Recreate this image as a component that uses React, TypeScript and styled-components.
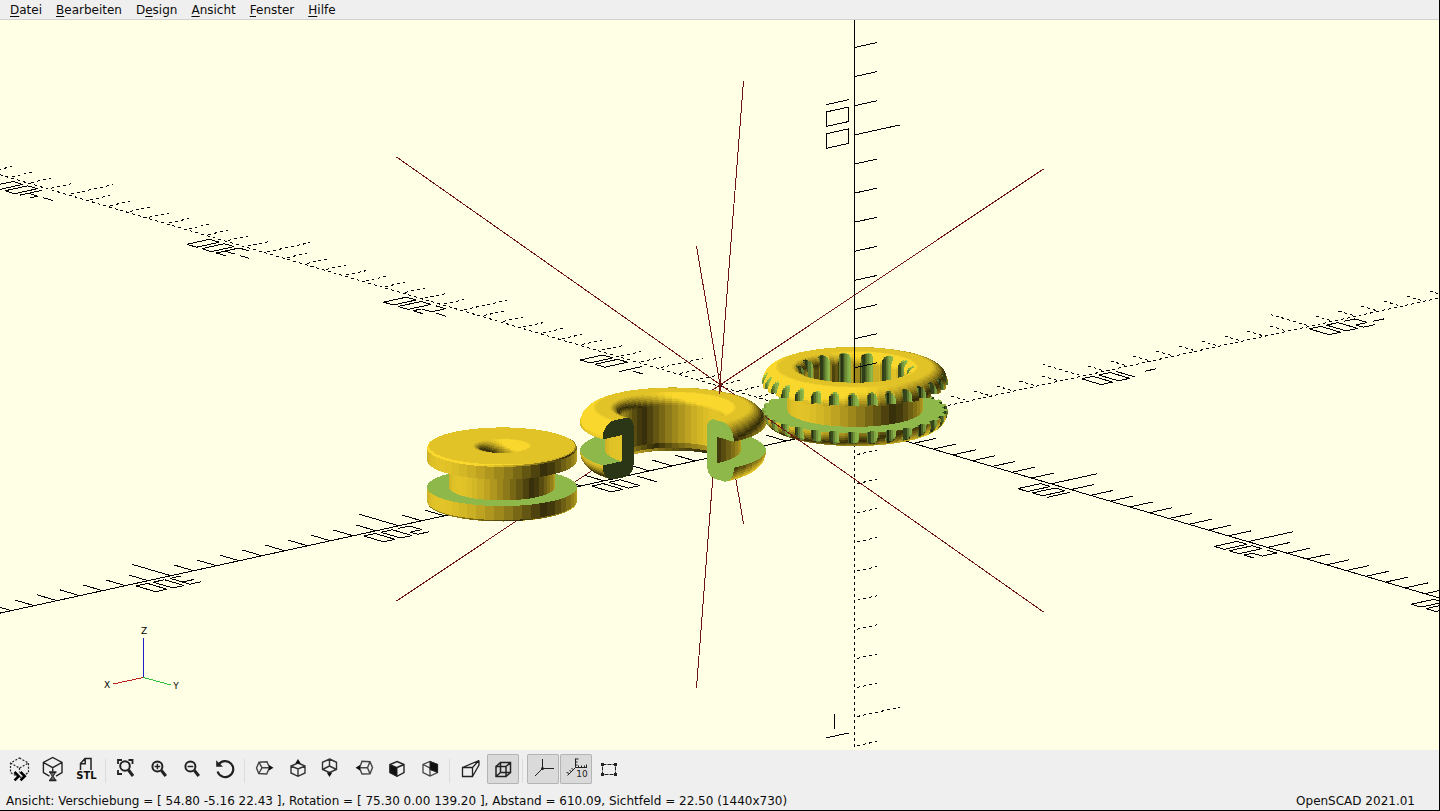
import React, { useMemo } from "react";
import styled, { createGlobalStyle } from "styled-components";

const GlobalStyle = createGlobalStyle`
  * { box-sizing: border-box; }
  body { margin: 0; background: #efefef; }
`;

const Window = styled.div`
  display: flex;
  flex-direction: column;
  height: 100vh;
  background: #efefef;
  border-right: 1px solid #000;
  border-bottom: 1px solid #000;
  color: #0c0c0c;
  font: 12px/16px "DejaVu Sans", sans-serif;
`;

const MenuBar = styled.nav`
  display: flex;
  gap: 14px;
  height: 20px;
  flex: none;
  padding: 1px 10px 0;
  border-bottom: 1px solid #d2d2d0;
`;

const MenuItem = styled.button`
  padding: 0;
  border: 0;
  background: none;
  color: inherit;
  font: inherit;
`;

const Mnemonic = styled.span`
  text-decoration: underline;
  text-underline-offset: 2px;
`;

const Viewport = styled.main`
  flex: 1;
  min-height: 0;
  background: #ffffe5;
`;

const Scene = styled.svg`
  display: block;
  width: 100%;
  height: 100%;
`;

const ToolBar = styled.div`
  display: flex;
  gap: 1px;
  flex: none;
  padding: 4px 4px 6px;
`;

const Tool = styled.button<{ $active?: boolean }>`
  width: 32px;
  height: 30px;
  padding: 0;
  border: 0;
  border-radius: 2px;
  background: ${(p) => (p.$active ? "#dadada" : "none")};
  box-shadow: ${(p) => (p.$active ? "inset 0 0 0 1px #b4b4b4" : "none")};
  color: #222;
`;

const ToolIcon = styled.svg`
  display: block;
  width: 32px;
  height: 30px;
  fill: none;
  stroke: currentColor;
`;

const Separator = styled.span`
  width: 1px;
  margin: 5px 3px 1px 2px;
  background: #dcdcdc;
`;

const StatusBar = styled.footer`
  display: flex;
  justify-content: space-between;
  height: 20px;
  flex: none;
  padding: 3px 24px 0 6px;
  white-space: nowrap;
`;

/* ---------- camera ---------- */

type Vec3 = [number, number, number];
type Point = [number, number];

const RAD = Math.PI / 180;
const TILT_SIN = Math.sin(75.3 * RAD);
const TILT_COS = Math.cos(75.3 * RAD);
const HEADING = 139.2;
const UNIT = 30.1;
const ORIGIN: Point = [854.5, 406];

const AXIS: Record<"x" | "y" | "z", Point> = {
  x: [UNIT * Math.cos(HEADING * RAD), UNIT * Math.sin(HEADING * RAD) * TILT_COS],
  y: [UNIT * Math.sin(HEADING * RAD), -UNIT * Math.cos(HEADING * RAD) * TILT_COS],
  z: [0, -UNIT * TILT_SIN],
};

const at = (base: Point, a: Point, n: number, b: Point, m: number): Point => [
  base[0] + a[0] * n + b[0] * m,
  base[1] + a[1] * n + b[1] * m,
];
const r1 = (n: number) => Math.round(n * 10) / 10;
const seg = (p: Point, q: Point) => `M${r1(p[0])} ${r1(p[1])}L${r1(q[0])} ${r1(q[1])}`;

/* ---------- rulers ---------- */

interface Ruler {
  dir: Point;
  up: Point;
  tick: number;
  sign: 1 | -1;
  forward: boolean;
  length: number;
}

const RULERS: Ruler[] = [
  { dir: AXIS.x, up: AXIS.y, tick: -1, sign: 1, forward: true, length: 39 },
  { dir: AXIS.y, up: AXIS.x, tick: -1, sign: 1, forward: false, length: 34 },
  { dir: AXIS.z, up: AXIS.x, tick: -1, sign: 1, forward: false, length: 15 },
  { dir: AXIS.x, up: AXIS.y, tick: -1, sign: -1, forward: false, length: 28 },
  { dir: AXIS.y, up: AXIS.x, tick: -1, sign: -1, forward: true, length: 45 },
  { dir: AXIS.z, up: AXIS.x, tick: -1, sign: -1, forward: true, length: 14 },
];

const STROKES: Record<string, string[][]> = {
  "0": [["TL", "TR", "BR", "BL", "TL"]],
  "1": [["T1", "B1"]],
  "2": [["TL", "TR", "MR", "ML", "BL", "BR"]],
  "3": [["TL", "TR", "BR", "BL"], ["ML", "MR"]],
  "4": [["TL", "ML", "MR"], ["TR", "BR"]],
  "-": [["ML", "MR"]],
};

function rulerPaths(r: Ruler) {
  const p = (n: number, h: number) => at(ORIGIN, r.dir, n * r.sign, r.up, h);
  const line = seg(p(0, 0), p(r.length, 0));
  let ticks = "";
  for (let n = 1; n < r.length; n++) ticks += seg(p(n, 0), p(n, r.tick * (n % 10 ? 1 : 2)));
  let labels = "";
  for (let n = 10; n < r.length + 2; n += 10) {
    const text = (r.sign < 0 ? "-" : "") + n * 10;
    const chars = r.forward ? [...text] : [...text].reverse();
    chars.forEach((ch, k) => {
      const c = n + k * 0.75;
      const left = r.forward ? c - 0.25 : c + 0.25;
      const right = r.forward ? c + 0.25 : c - 0.25;
      const row: Record<string, number> = { T: 1.25, M: 0.875, B: 0.25 };
      const col: Record<string, number> = { L: left, R: right, "1": c - 0.25 };
      STROKES[ch].forEach((s) => {
        for (let i = 1; i < s.length; i++)
          labels += seg(p(col[s[i - 1][1]], row[s[i - 1][0]]), p(col[s[i][1]], row[s[i][0]]));
      });
    });
  }
  return { line, ticks, labels };
}

/* ---------- grommets ---------- */

const LIGHT: Vec3 = [-0.5774, 0.411, 0.705];
const YELLOW: Vec3 = [249, 215, 44];
const GREEN: Vec3 = [157, 203, 81];

interface Grommet {
  cx: number;
  cy: number;
  outer: number;
  hub: number;
  bore: number;
  edge: number;
  lip: number;
  levels: [number, number, number];
  cut?: boolean;
  grooves?: boolean;
}

interface ProfilePoint {
  r: number;
  z: number;
  green?: boolean;
}

const GROMMETS: Grommet[] = [
  { cx: 855, cy: 406, outer: 93, hub: 68, bore: 52, edge: 16, lip: 11, levels: [17, 44, 61], grooves: true },
  { cx: 673, cy: 446.5, outer: 93, hub: 68, bore: 52, edge: 16, lip: 11, levels: [17, 44, 61], cut: true },
  { cx: 502, cy: 483, outer: 75, hub: 53, bore: 19, edge: 2, lip: 10, levels: [16.5, 44, 59] },
];

function profile(g: Grommet): ProfilePoint[] {
  const [a, b, top] = g.levels;
  const pts: ProfilePoint[] = [];
  const arc = (r: number, z: number, rad: number, from: number, to: number, steps: number) => {
    for (let i = 0; i <= steps; i++) {
      const t = (from + ((to - from) * i) / steps) * RAD;
      pts.push({ r: r + rad * Math.cos(t), z: z + rad * Math.sin(t) });
    }
  };
  const steps = g.edge > 5 ? 11 : 2;
  arc(g.bore + g.lip, g.lip, g.lip, 180, 270, 3);
  arc(g.outer - g.edge, g.edge, g.edge, -90, 0, steps);
  pts.push({ r: g.outer, z: a, green: true });
  pts.push({ r: (g.outer + g.hub) / 2, z: a, green: true });
  pts.push({ r: g.hub, z: a });
  pts.push({ r: g.hub, z: (a + b) / 2 });
  pts.push({ r: g.hub, z: b, green: true });
  pts.push({ r: g.outer, z: b });
  arc(g.outer - g.edge, top - g.edge, g.edge, 0, 90, steps);
  pts.push({ r: (g.outer - g.edge + g.bore + g.lip) / 2, z: top });
  arc(g.bore + g.lip, top - g.lip, g.lip, 90, 180, 9);
  pts.push({ r: g.bore, z: top * 0.6 });
  pts.push({ r: g.bore, z: top * 0.35 });
  pts.push({ r: g.bore, z: g.lip });
  return pts;
}

const wrap = (a: number, step: number) => a - Math.round(a / step) * step;

function outerLimit(deg: number) {
  const d = wrap(deg, 12) * RAD;
  const q = 5.5 * 5.5 - (93 * Math.sin(d)) ** 2;
  return q > 0 ? 93 * Math.cos(d) - Math.sqrt(q) : Infinity;
}

function innerLimit(deg: number) {
  const d = wrap(deg, 24) * RAD;
  const q = 36 - (53 * Math.sin(d)) ** 2;
  return q > 0 ? 53 * Math.cos(d) + Math.sqrt(q) : 0;
}

function paint(base: Vec3, n: Vec3) {
  const len = Math.hypot(...n) || 1;
  const s = Math.min(1, 0.2 + Math.abs((n[0] * LIGHT[0] + n[1] * LIGHT[1] + n[2] * LIGHT[2]) / len));
  return `rgb(${base.map((c) => Math.round(c * s)).join(",")})`;
}

interface Face {
  depth: number;
  fill: string;
  points: string;
}

function buildFaces(g: Grommet): Face[] {
  const prof = profile(g);
  const facet = 7.2;
  const angles = new Set<number>();
  for (let i = 0; i <= 50; i++) angles.add(r1(i * facet));
  if (g.cut) {
    angles.add(270);
  }
  if (g.grooves) {
    for (let k = 0; k < 30; k++)
      [-3.4, -3.2, -2.6, -1.4, 0, 1.4, 2.6, 3.2, 3.4].forEach((d) => angles.add(r1((k * 12 + d + 360) % 360)));
    for (let k = 0; k < 15; k++)
      [-6.5, -5.8, -4.4, 4.4, 5.8, 6.5].forEach((d) => angles.add(r1((k * 24 + d + 360) % 360)));
  }
  const list = [...angles].sort((p, q) => p - q).filter((v) => !g.cut || v <= 270);

  const project = (p: Vec3) =>
    `${r1(g.cx + p[0])},${r1(g.cy + p[1] * TILT_COS - p[2] * TILT_SIN)}`;
  const depthOf = (p: Vec3) => p[1] * TILT_SIN + p[2] * TILT_COS;

  const place = (pt: ProfilePoint, deg: number): Vec3 => {
    const local = (deg - (Math.floor(deg / facet + 1e-6) + 0.5) * facet) * RAD;
    let r = (pt.r * Math.cos((facet / 2) * RAD)) / Math.cos(local);
    if (g.grooves) {
      if (r > 75) r = Math.min(r, outerLimit(deg));
      if (r < 64) r = Math.max(r, innerLimit(deg));
    }
    const az = (HEADING + deg) * RAD;
    return [r * Math.cos(az), r * Math.sin(az), pt.z];
  };

  const faces: Face[] = [];
  for (let j = 1; j < list.length; j++) {
    const t0 = list[j - 1];
    const t1 = list[j];
    const mid = (t0 + t1) / 2;
    for (let i = 0; i < prof.length - 1; i++) {
      const s0 = prof[i];
      const s1 = prof[i + 1];
      const p = [place(s0, t0), place(s0, t1), place(s1, t1), place(s1, t0)];
      const e: Vec3 = [p[2][0] - p[0][0], p[2][1] - p[0][1], p[2][2] - p[0][2]];
      const f: Vec3 = [p[3][0] - p[1][0], p[3][1] - p[1][1], p[3][2] - p[1][2]];
      const n: Vec3 = [
        e[1] * f[2] - e[2] * f[1],
        e[2] * f[0] - e[0] * f[2],
        e[0] * f[1] - e[1] * f[0],
      ];
      if (depthOf(n) <= 0) continue;
      const rm = (s0.r + s1.r) / 2;
      const carved =
        !!g.grooves && ((rm > 75 && rm > outerLimit(mid)) || (rm < 64 && rm < innerLimit(mid)));
      faces.push({
        depth: p.reduce((sum, q) => sum + depthOf(q), 0) / 4,
        fill: paint(s0.green || carved ? GREEN : YELLOW, n),
        points: p.map(project).join(" "),
      });
    }
  }
  faces.sort((m, n) => m.depth - n.depth);

  if (g.cut) {
    const cap = (deg: number, side: number) => {
      const az = (HEADING + deg) * RAD;
      faces.push({
        depth: 0,
        fill: paint(GREEN, [-Math.sin(az) * side, Math.cos(az) * side, 0]),
        points: prof.map((s) => project([s.r * Math.cos(az), s.r * Math.sin(az), s.z])).join(" "),
      });
    };
    cap(0, -1);
    cap(270, 1);
  }
  return faces;
}

function Model() {
  const faces = useMemo(() => GROMMETS.map(buildFaces), []);
  return (
    <>
      {faces.map((list, k) => (
        <g key={k} shapeRendering="crispEdges">
          {list.map((f, i) => (
            <polygon key={i} points={f.points} fill={f.fill} />
          ))}
        </g>
      ))}
    </>
  );
}

function Rulers() {
  return (
    <g stroke="#000" fill="none" shapeRendering="crispEdges">
      {RULERS.map((r, i) => {
        const { line, ticks, labels } = rulerPaths(r);
        const dash = r.sign < 0 ? "3 3" : undefined;
        return (
          <g key={i}>
            <path d={line} strokeDasharray={dash} />
            <path d={ticks} strokeDasharray={dash} strokeDashoffset={dash ? 3 : 0} />
            <path d={labels} />
          </g>
        );
      })}
    </g>
  );
}

function View3D() {
  return (
    <Scene viewBox="0 0 1439 730" preserveAspectRatio="xMidYMid slice" role="img" aria-label="3D-Ansicht">
      <Rulers />
      <path
        d="M743.5 61L696.5 668M696.5 226L743.5 504M396.5 137L1043.5 592M1043.5 149L396.5 581"
        stroke="#6e1414"
        fill="none"
        shapeRendering="crispEdges"
      />
      <Model />
      <g fill="none" shapeRendering="crispEdges">
        <path d="M854.5 320V363M854.5 347.800L877.300 342.800" stroke="#000" />
        <path d="M765 396.500L800 421M719.500 364V374" stroke="#6e1414" />
      </g>
      <g fill="none" shapeRendering="crispEdges">
        <path d="M143.500 657V618" stroke="#2020c8" />
        <path d="M143.500 657.500L113 664" stroke="#c02020" />
        <path d="M143.500 657.500L171 665" stroke="#30c040" />
      </g>
      <g fill="#000" fontFamily="DejaVu Sans, sans-serif" fontSize="9" textAnchor="middle">
        <text x="107" y="668">X</text>
        <text x="176" y="669">Y</text>
        <text x="144" y="614">Z</text>
      </g>
    </Scene>
  );
}

/* ---------- toolbar ---------- */

type ToolDef = { name: string; icon: React.ReactNode; active?: boolean };

const Lens = ({ x }: { x: number }) => (
  <>
    <circle cx={x} cy="12.5" r="5" strokeWidth="2" />
    <path d={`M${x + 4} 16.500L${x + 8.4} 22`} strokeWidth="3" />
  </>
);

const GROUPS: ToolDef[][] = [
  [
    {
      name: "Vorschau",
      icon: (
        <>
          <path d="M15.5 4L24.5 9V18.500L15.500 24L6.500 18.500V9ZM6.500 9L15.500 14L24.500 9M15.500 14V18.500" strokeWidth="1.2" strokeDasharray="2 1.5" />
          <path d="M10.500 18L14.700 22.200L10.500 26.400M16.500 18L20.700 22.200L16.500 26.400" strokeWidth="2.6" stroke="#000" />
        </>
      ),
    },
    {
      name: "Rendern",
      icon: (
        <>
          <path d="M12.400 22.200L6.400 18.700V8.500L15.700 3.500L25 8.500V18.700L19 22.200M6.400 8.500L15.700 13.700L25 8.500M15.700 13.700V17.500" strokeWidth="1.4" />
          <path d="M12 18H19.500M12 26.500H19.500" strokeWidth="1.5" />
          <path d="M13 18.500H18.500L16.200 22.200L18.500 26H13L15.200 22.200Z" strokeWidth="1" fill="#666" />
        </>
      ),
    },
    {
      name: "Als STL exportieren",
      icon: (
        <>
          <path d="M10.500 16V9.500L15 4.500H21V16M15.200 4.500V9.700H10.500" strokeWidth="1.5" />
          <text x="16.5" y="25" textAnchor="middle" fontSize="10" fontWeight="bold" fontFamily="DejaVu Sans, sans-serif" fill="#111" stroke="none">STL</text>
        </>
      ),
    },
  ],
  [
    {
      name: "Alles anzeigen",
      icon: (
        <>
          <path d="M8 10V6H12M18.500 6H22.500V10M8 16V20H12" strokeWidth="1.8" />
          <circle cx="15" cy="12" r="4.8" strokeWidth="2" />
          <path d="M18.500 16L23 22" strokeWidth="3" />
        </>
      ),
    },
    { name: "Vergrößern", icon: (<><Lens x={14.4} /><path d="M11.600 12.500H17.200M14.400 9.700V15.300" strokeWidth="1.5" /></>) },
    { name: "Verkleinern", icon: (<><Lens x={14.4} /><path d="M11.600 12.500H17.200" strokeWidth="1.5" /></>) },
    {
      name: "Ansicht zurücksetzen",
      icon: (
        <>
          <path d="M9.700 10.500A8 8 0 1 1 8.600 17.500" strokeWidth="2.2" />
          <path d="M7.200 6.200V12.800H14Z" fill="currentColor" stroke="none" />
        </>
      ),
    },
  ],
  [
    { name: "Rechts", icon: (<><path d="M7.500 14L10 8.200L18 7.800L20.500 13.500L17.700 20L9.800 19.500ZM10 8.200L13 13.800L9.800 19.500M13 13.800H20.500" strokeWidth="1.4" stroke="#444" /><path d="M20 11L24.500 13.700L20 16.500Z" fill="#111" stroke="none" /></>) },
    { name: "Oben", icon: (<><path d="M16 9L23 12V19L16 22.300L9 19V12ZM9 12L16 15L23 12M16 15V22.300" strokeWidth="1.4" stroke="#333" /><path d="M13.200 9.500L16 5L18.800 9.500Z" fill="#111" stroke="none" /></>) },
    { name: "Unten", icon: (<><path d="M14.500 5L21.500 8.300V15.500L14.500 18.500L7.500 15.500V8.300ZM14.500 5V12L7.500 15.500M14.500 12L21.500 15.500" strokeWidth="1.4" stroke="#333" /><path d="M11.700 18.500L14.500 23L17.300 18.500Z" fill="#111" stroke="none" /></>) },
    { name: "Links", icon: (<><path d="M24.500 13.500L22 19.700L14 20L11.500 14L14 7.300L22 7.700ZM22 7.700L19.500 13.700L22 19.700M19.500 13.700H11.500" strokeWidth="1.4" stroke="#444" /><path d="M12 11L7.500 13.700L12 16.500Z" fill="#111" stroke="none" /></>) },
    { name: "Vorne", icon: (<><path d="M16 7.500L23 10.500V18.500L16 22.300L9 18.500V10.500ZM16 13.500L23 10.500" strokeWidth="1.4" /><path d="M9 10.500L16 13.500V22.300L9 18.500Z" fill="#111" /></>) },
    { name: "Hinten", icon: (<><path d="M16 7.500L23.500 10.500V18.500L16 22L9 18.500V10.500ZM9 10.500L16 14V22" strokeWidth="1.3" stroke="#444" /><path d="M16 7.500L23.500 10.500V18.500L16 15.500Z" fill="#111" /></>) },
  ],
  [
    { name: "Perspektivisch", icon: (<path d="M8.500 13.500H18.500V22.500H8.500ZM8.500 13.500L25 6.500L18.500 13.500M25 6.500V11L18.500 22.500" strokeWidth="1.3" />) },
    { name: "Orthogonal", active: true, icon: (<path d="M9 12.500H19V22.500H9ZM13.500 8.500H23.500V18.500H13.500ZM9 12.500L13.500 8.500M19 12.500L23.500 8.500M19 22.500L23.500 18.500M9 22.500L13.500 18.500" strokeWidth="1.5" />) },
  ],
  [
    { name: "Achsen anzeigen", active: true, icon: (<><path d="M15.500 5V14.500H27M15.500 14.500L8 22" strokeWidth="1" /><circle cx="15.5" cy="14.5" r="1.5" fill="currentColor" stroke="none" /></>) },
    {
      name: "Skalenmarkierungen anzeigen",
      active: true,
      icon: (
        <>
          <path d="M15.500 4.500V13.500H27M15.500 13.500L7.500 21.500M15.500 5H18.500M15.500 8H17.500M15.500 11H17.500M18.500 13.500V11.500M21.500 13.500V11.500M24.500 13.500V11.500M26.500 13.500V10.500M13.500 15.500L11.500 14.500M11.500 17.500L9.500 16.500M9.500 19.500L6.500 18.500" strokeWidth="1" />
          <text x="22" y="23" textAnchor="middle" fontSize="9" fontFamily="DejaVu Sans, sans-serif" fill="#222" stroke="none">10</text>
        </>
      ),
    },
    { name: "Kanten anzeigen", icon: (<><path d="M9.500 10.500H22.500V20.500H9.500Z" strokeWidth="1" strokeDasharray="4 1" /><path d="M8 9h3v3h-3zM21 9h3v3h-3zM8 19h3v3h-3zM21 19h3v3h-3z" fill="currentColor" stroke="none" /></>) },
  ],
];

const MENUS: [string, string, string][] = [
  ["", "D", "atei"],
  ["", "B", "earbeiten"],
  ["D", "e", "sign"],
  ["", "A", "nsicht"],
  ["", "F", "enster"],
  ["", "H", "ilfe"],
];

export default function App() {
  return (
    <Window>
      <GlobalStyle />
      <MenuBar>
        {MENUS.map(([before, key, after]) => (
          <MenuItem key={before + key + after} type="button">
            {before}
            <Mnemonic>{key}</Mnemonic>
            {after}
          </MenuItem>
        ))}
      </MenuBar>
      <Viewport>
        <View3D />
      </Viewport>
      <ToolBar role="toolbar" aria-label="Ansicht">
        {GROUPS.map((group, gi) => (
          <React.Fragment key={gi}>
            {gi > 0 && <Separator />}
            {group.map((t) => (
              <Tool key={t.name} type="button" aria-label={t.name} aria-pressed={t.active} $active={t.active}>
                <ToolIcon viewBox="0 0 32 30" aria-hidden="true">
                  {t.icon}
                </ToolIcon>
              </Tool>
            ))}
          </React.Fragment>
        ))}
      </ToolBar>
      <StatusBar>
        <span>
          Ansicht: Verschiebung = [ 54.80 -5.16 22.43 ], Rotation = [ 75.30 0.00 139.20 ], Abstand = 610.09, Sichtfeld = 22.50 (1440x730)
        </span>
        <span>OpenSCAD 2021.01</span>
      </StatusBar>
    </Window>
  );
}
